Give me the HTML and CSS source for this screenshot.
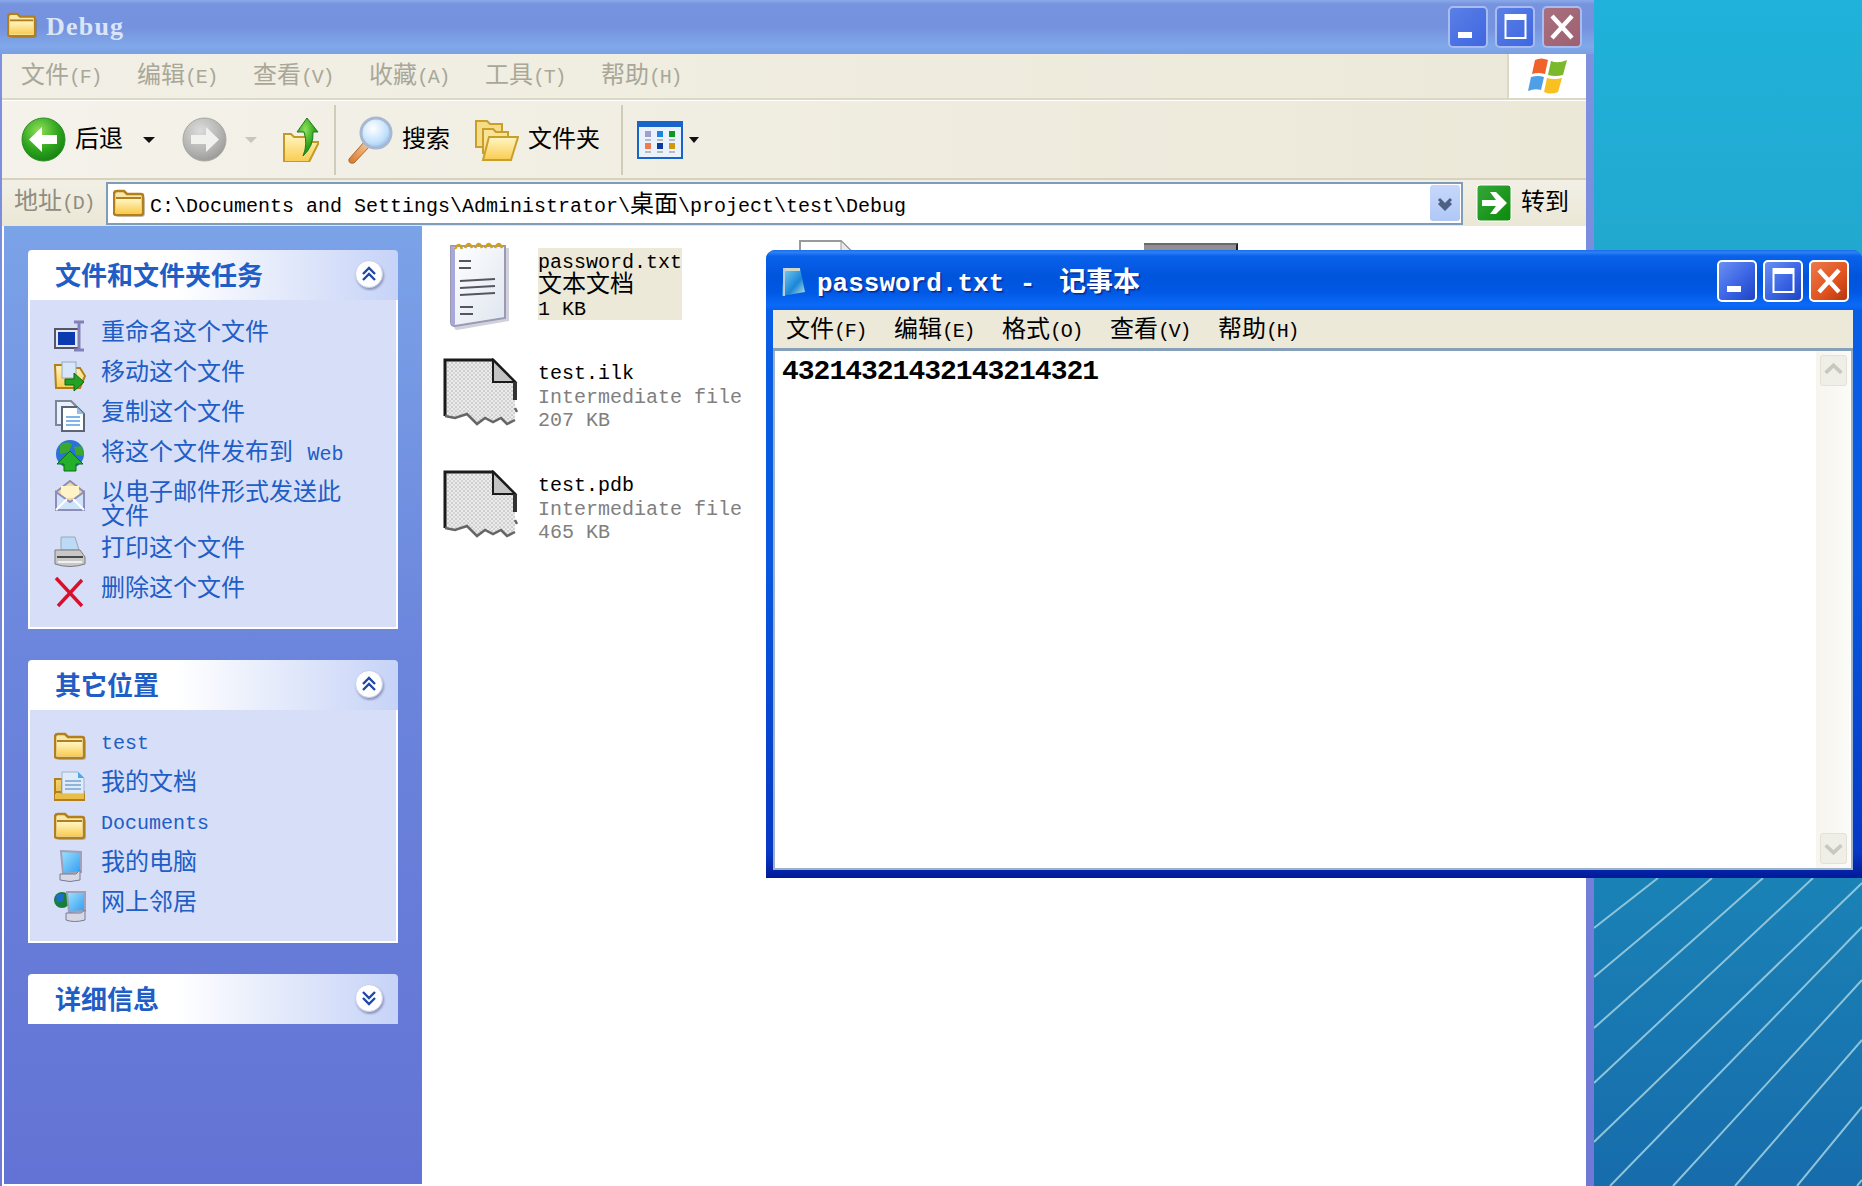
FILE: index.html
```html
<!DOCTYPE html>
<html lang="zh-CN">
<head>
<meta charset="utf-8">
<title>password.txt - 记事本</title>
<link rel="stylesheet" href="styles.css">
</head>
<body>
<svg class="defs" width="0" height="0" aria-hidden="true">
  <defs>
    <linearGradient id="gFolder" x1="0" y1="0" x2="0" y2="1"><stop offset="0" stop-color="#fff6c4"/><stop offset="1" stop-color="#f9cc50"/></linearGradient>
    <linearGradient id="gFolderD" x1="0" y1="0" x2="1" y2="1"><stop offset="0" stop-color="#f6d874"/><stop offset="1" stop-color="#c9971f"/></linearGradient>
    <radialGradient id="gGreen" cx=".4" cy=".3" r=".8"><stop offset="0" stop-color="#8fe05a"/><stop offset=".55" stop-color="#2fa51d"/><stop offset="1" stop-color="#0f7a12"/></radialGradient>
    <radialGradient id="gGray" cx=".4" cy=".3" r=".8"><stop offset="0" stop-color="#dcdcdc"/><stop offset=".6" stop-color="#b4b4b2"/><stop offset="1" stop-color="#929290"/></radialGradient>
    <radialGradient id="gLens" cx=".4" cy=".35" r=".7"><stop offset="0" stop-color="#ffffff"/><stop offset=".7" stop-color="#bfe0fb"/><stop offset="1" stop-color="#8db6e6"/></radialGradient>
    <linearGradient id="gHandle" x1="1" y1="0" x2="0" y2="1"><stop offset="0" stop-color="#f6cfa0"/><stop offset="1" stop-color="#d9752a"/></linearGradient>
    <linearGradient id="gGo" x1="0" y1="0" x2="1" y2="1"><stop offset="0" stop-color="#36a83a"/><stop offset="1" stop-color="#0a8a0a"/></linearGradient>
    <linearGradient id="gScreen" x1="0" y1="0" x2="1" y2="1"><stop offset="0" stop-color="#9fe2ff"/><stop offset="1" stop-color="#2f9bf0"/></linearGradient>
    <linearGradient id="gPad" x1="0" y1="0" x2="1" y2="1"><stop offset="0" stop-color="#7fd4ee"/><stop offset=".6" stop-color="#1b86d8"/><stop offset="1" stop-color="#bfe8d8"/></linearGradient>
    <linearGradient id="gNote" x1="0" y1="0" x2="1" y2="1"><stop offset="0" stop-color="#ffffff"/><stop offset="1" stop-color="#dfe6f0"/></linearGradient>
    <pattern id="pDither" width="4" height="4" patternUnits="userSpaceOnUse"><rect width="4" height="4" fill="#ececec"/><rect width="2" height="2" fill="#cdcdcd"/><rect x="2" y="2" width="2" height="2" fill="#d4d4d4"/></pattern>
    <filter id="fShadow" x="-20%" y="-20%" width="150%" height="150%"><feDropShadow dx="1" dy="2" stdDeviation="1" flood-color="#3a3a6a" flood-opacity=".45"/></filter>

    <symbol id="i-folder" viewBox="0 0 32 28">
      <path d="M3 7 Q3 4 6 4 H12 L15 7 H29 Q32 7 32 10 V25 Q32 28 29 28 H6 Q3 28 3 25Z" fill="#555" opacity=".3"/>
      <path d="M1 5 Q1 2 4 2 H11 L14 5 H28 Q30 5 30 7 V24 Q30 26 28 26 H3 Q1 26 1 24Z" fill="#f7e7a8" stroke="#b27f1c" stroke-width="2.500"/>
      <rect x="3" y="10" width="25" height="14" fill="url(#gFolder)"/>
      <path d="M3 9 H28" stroke="#b27f1c" stroke-width="2"/>
    </symbol>
    <symbol id="i-back" viewBox="0 0 45 45">
      <circle cx="22.5" cy="22.5" r="21.5" fill="url(#gGreen)" stroke="#2a8a22"/>
      <path d="M8 22.5 L21 10 V18 H36 V27 H21 V35Z" fill="#fff"/>
    </symbol>
    <symbol id="i-forward" viewBox="0 0 45 45">
      <circle cx="22.5" cy="22.5" r="21.5" fill="url(#gGray)" stroke="#a6a6a4"/>
      <path d="M37 22.5 L24 10 V18 H9 V27 H24 V35Z" fill="#f1f1ee"/>
    </symbol>
    <symbol id="i-up" viewBox="0 0 36 44">
      <path d="M1 16 H8 L11 19 H26 V24 H36 L26 44 H1Z" fill="url(#gFolder)" stroke="#c39a2a" stroke-width="2"/>
      <path d="M24 0 L35 14 H30 Q31 28 20 38 Q25 26 21 14 H14Z" fill="url(#gGreen)" stroke="#1e7e1e"/>
    </symbol>
    <symbol id="i-search" viewBox="0 0 48 48">
      <path d="M3 43 L19 25 L24 30 L8 47 Q2 48 3 43Z" fill="url(#gHandle)" stroke="#a8672e"/>
      <circle cx="30" cy="17" r="15" fill="url(#gLens)" stroke="#a9b8d2" stroke-width="3"/>
    </symbol>
    <symbol id="i-folders" viewBox="0 0 44 42">
      <path d="M1 2 H12 L15 5 H27 V28 H1Z" fill="#f5dc86" stroke="#c99f2a" stroke-width="2"/>
      <path d="M8 10 H18 L21 13 H33 V34 H8Z" fill="#f8e398" stroke="#c99f2a" stroke-width="2"/>
      <path d="M14 18 H43 L36 41 H8Z" fill="url(#gFolder)" stroke="#c99f2a" stroke-width="2"/>
    </symbol>
    <symbol id="i-views" viewBox="0 0 46 38">
      <rect x="1" y="1" width="44" height="36" fill="#eaf3fd" stroke="#1864c8" stroke-width="2"/>
      <rect x="1" y="1" width="44" height="5" fill="#1864c8"/>
      <rect x="8" y="10" width="6" height="6" fill="#a0a0cf"/><rect x="20" y="10" width="6" height="6" fill="#1a86e0"/><rect x="32" y="10" width="6" height="6" fill="#0e9a1e"/>
      <rect x="8" y="22" width="6" height="6" fill="#f07a50"/><rect x="20" y="22" width="6" height="6" fill="#0a3ca0"/><rect x="32" y="22" width="6" height="6" fill="#d09a10"/>
      <path d="M8 19 H14 M20 19 H26 M32 19 H38 M8 31 H14 M20 31 H26 M32 31 H38" stroke="#a8a8a8" stroke-width="1.5"/>
    </symbol>
    <symbol id="i-flag" viewBox="0 0 40 38">
      <path d="M7 3 Q13 0 20 3 L17 17 Q10 15 4 17Z" fill="#f0622a"/>
      <path d="M23 4 Q30 7 39 3 L35 18 Q27 20 20 18Z" fill="#7ab82c"/>
      <path d="M3 20 Q10 18 16 20 L13 33 Q7 31 0 34Z" fill="#4f9ee8"/>
      <path d="M19 21 Q26 23 34 21 L30 35 Q23 38 16 35Z" fill="#f8c020"/>
    </symbol>
    <symbol id="i-go" viewBox="0 0 36 38">
      <rect x="1" y="1" width="34" height="36" rx="3" fill="url(#gGo)" stroke="#fff"/>
      <path d="M6 16 H20 L14 8 H20 L31 19 L20 30 H14 L20 22 H6Z" fill="#fff"/>
    </symbol>
    <symbol id="i-chev-dd" viewBox="0 0 30 36">
      <path d="M9 14 L15 20 L21 14 M9 18 L15 24 L21 18" fill="none" stroke="#4d6185" stroke-width="3"/>
    </symbol>
    <symbol id="i-up2" viewBox="0 0 32 32">
      <circle cx="15" cy="15" r="13.5" fill="#fff" stroke="#c5cfec" filter="url(#fShadow)"/>
      <path d="M9 15 L15 9 L21 15 M9 21 L15 15 L21 21" fill="none" stroke="#2048a8" stroke-width="2.4"/>
    </symbol>
    <symbol id="i-down2" viewBox="0 0 32 32">
      <circle cx="15" cy="15" r="13.5" fill="#fff" stroke="#c5cfec" filter="url(#fShadow)"/>
      <path d="M9 9 L15 15 L21 9 M9 15 L15 21 L21 15" fill="none" stroke="#2048a8" stroke-width="2.4"/>
    </symbol>
    <symbol id="i-rename" viewBox="0 0 32 32">
      <rect x="1" y="9" width="24" height="19" fill="#e8e8f0" stroke="#55556a" stroke-width="2"/>
      <rect x="4" y="12" width="17" height="13" fill="#0c3ab0"/>
      <path d="M20 2 H30 M25 2 V30 M20 30 H30" fill="none" stroke="#8480b8" stroke-width="3"/>
    </symbol>
    <symbol id="i-move" viewBox="0 0 32 32">
      <path d="M1 5 H9 L11 8 H26 L31 16 L26 28 H2Z" fill="url(#gFolder)" stroke="#b27f1c" stroke-width="2"/>
      <rect x="8" y="2" width="14" height="16" fill="#d7e6fb" stroke="#9ab"/>
      <path d="M11 19 H20 V13 L30 22 L20 31 V25 H11Z" fill="#23a026" stroke="#0c6a12"/>
    </symbol>
    <symbol id="i-copy" viewBox="0 0 32 32">
      <path d="M2 1 H17 L22 6 V25 H2Z" fill="#e8f0fb" stroke="#7d8796" stroke-width="2"/>
      <path d="M8 7 H23 L30 14 V31 H8Z" fill="#fff" stroke="#5a6678" stroke-width="2"/>
      <path d="M23 7 V14 H30Z" fill="#8fc0f0"/>
      <path d="M12 17 H26 M12 21 H26 M12 25 H26" stroke="#7fb6ea" stroke-width="2"/>
    </symbol>
    <symbol id="i-publish" viewBox="0 0 32 32">
      <circle cx="16" cy="14" r="14" fill="#2a72d8"/>
      <path d="M6 5 Q13 0 18 4 L15 12 L6 14Z M20 7 L28 6 L30 16 L22 15Z" fill="#3aa82e"/>
      <path d="M16 11 L29 24 H22 V31 H10 V24 H3Z" fill="#25b02a" stroke="#0e6e14"/>
    </symbol>
    <symbol id="i-mail" viewBox="0 0 32 32">
      <path d="M2 12 L16 1 L30 12 V30 H2Z" fill="#f7d89a" stroke="#8d8db8" stroke-width="2"/>
      <rect x="7" y="6" width="18" height="12" fill="#fff3c8"/>
      <path d="M2 12 L16 22 L30 12 V30 H2Z" fill="#cfe4fa" stroke="#8d8db8" stroke-width="2"/>
      <path d="M2 30 L13 19 M30 30 L19 19" stroke="#fff" stroke-width="2"/>
    </symbol>
    <symbol id="i-print" viewBox="0 0 32 32">
      <path d="M7 1 H21 L25 14 H7Z" fill="#bcd9f5" stroke="#9aa8b8"/>
      <path d="M1 14 H26 L31 21 V28 Q16 33 1 28Z" fill="#c8c8c8" stroke="#7b7b7b"/>
      <path d="M3 21 H29" stroke="#4a4a4a" stroke-width="2"/>
      <path d="M4 26 H28" stroke="#f0f0f0" stroke-width="2"/>
    </symbol>
    <symbol id="i-delete" viewBox="0 0 32 32">
      <path d="M2 2 L28 30 M28 4 L4 30" stroke="#d8102c" stroke-width="3.4"/>
    </symbol>
    <symbol id="i-docs" viewBox="0 0 32 32">
      <path d="M1 9 H8 V30 H1Z M1 22 H30 V30 H1Z" fill="url(#gFolderD)" stroke="#b27f1c" stroke-width="2"/>
      <path d="M8 2 H24 L30 8 V24 H8Z" fill="#dfeafa" stroke="#9eb4cc"/>
      <path d="M24 2 V8 H30Z" fill="#4aa8ee"/>
      <path d="M11 11 H27 M11 15 H27 M11 19 H27" stroke="#8fb4d8" stroke-width="2"/>
      <path d="M1 24 H30 V29 H1Z" fill="#e9bd48"/>
    </symbol>
    <symbol id="i-pc" viewBox="0 0 32 32">
      <path d="M7 1 L27 2 V22 L9 24Z" fill="url(#gScreen)" stroke="#a0a0b8" stroke-width="2"/>
      <path d="M6 24 H22 L26 20 V30 Q16 33 6 30Z" fill="#d8d8e4" stroke="#7a7a98"/>
    </symbol>
    <symbol id="i-net" viewBox="0 0 32 32">
      <circle cx="8" cy="10" r="8" fill="#16803a"/>
      <path d="M2 6 Q6 2 10 5 L9 11 L3 13Z" fill="#1f6fc8"/>
      <path d="M13 2 L31 2 V21 L15 22Z" fill="url(#gScreen)" stroke="#a0a0b8" stroke-width="2"/>
      <path d="M12 23 H27 L31 20 V30 Q20 33 12 30Z" fill="#d8d8e4" stroke="#7a7a98"/>
    </symbol>
    <symbol id="i-note" viewBox="0 0 61 90">
      <path d="M5 6 H58 V79 L6 88 Q3 88 3 84Z" fill="#7a7a9c" opacity=".35" transform="translate(2 2)"/>
      <path d="M2 6 H56 V78 L6 86 Q2 86 2 82Z" fill="url(#gNote)" stroke="#9a9ab4" stroke-width="2"/>
      <path d="M2 6 V84 L6 86 V8Z" fill="#a8a8dc"/>
      <path d="M6 9 Q10 1 13 9 M16 8 Q20 0 23 8 M26 8 Q30 0 33 8 M36 8 Q40 0 43 8 M46 8 Q50 0 53 8" fill="none" stroke="#d0a020" stroke-width="2.6"/>
      <path d="M10 21 H22 M10 28 H22 M11 41 L46 39 M11 48 L46 46 M11 55 L46 53 M11 67 H24 M11 74 H24" stroke="#55555f" stroke-width="2.2"/>
    </symbol>
    <symbol id="i-unknown" viewBox="0 0 75 68">
      <path d="M2 2 H50 L72 24 V62 L64 66 L58 60 L50 64 L42 60 L34 66 L24 56 L12 60 L2 58Z" fill="url(#pDither)"/>
      <path d="M2 58 V2 H50 L72 24 V42" fill="none" stroke="#1a1a1a" stroke-width="3"/>
      <path d="M50 2 L72 24 H50Z" fill="#c4c4c4" stroke="#1a1a1a" stroke-width="2"/>
      <path d="M72 24 V42" fill="none" stroke="#333" stroke-width="4"/>
      <path d="M72 50 L74 54 M2 58 L12 60 L24 56 L34 66 L42 60 L50 64 L58 60 L64 66 L72 62" fill="none" stroke="#666" stroke-width="2.500"/>
    </symbol>
    <symbol id="i-doc" viewBox="0 0 60 70">
      <path d="M1 1 H42 L59 18 V69 H1Z" fill="#fff" stroke="#999" stroke-width="2"/>
      <path d="M42 1 V18 H59Z" fill="#e8e8e8" stroke="#999"/>
    </symbol>
    <symbol id="i-padsmall" viewBox="0 0 26 30">
      <path d="M4 2 H20 L25 26 L2 30Z" fill="url(#gPad)"/>
      <path d="M4 2 H20 V5 H4Z" fill="#cfd8c8"/>
      <path d="M4 2 V30" stroke="#bcd" stroke-width="2"/>
    </symbol>
    <symbol id="i-min" viewBox="0 0 40 42"><rect x="10" y="26" width="14" height="6" fill="#fff"/></symbol>
    <symbol id="i-max" viewBox="0 0 40 42"><rect x="10.5" y="9" width="20" height="23" fill="none" stroke="#fff" stroke-width="2"/><rect x="10" y="9" width="21" height="5" fill="#fff"/></symbol>
    <symbol id="i-close" viewBox="0 0 40 42"><path d="M10 10 L30 32 M30 10 L10 32" stroke="#fff" stroke-width="4.4"/></symbol>
  </defs>
</svg>

<main class="desktop">
  <svg class="stripes" viewBox="0 0 269 308" width="269" height="308" aria-hidden="true">
    <path d="M1 50 L65 0 M1 99 L119 0 M1 150 L170 0 M1 205 L220 0 M1 264 L269 5 M17 308 L269 49 M80 308 L269 102 M142 308 L269 162 M204 308 L269 229 M264 308 L269 302" fill="none" stroke="#8ec4da" stroke-width="2"/>
  </svg>

  <section class="explorer">
    <header class="xtitle">
      <svg class="xtitle-icon"><use href="#i-folder"/></svg>
      <span class="xtitle-text">Debug</span>
      <div class="wbtns xbtns">
        <span class="wbtn"><svg><use href="#i-min"/></svg></span>
        <span class="wbtn"><svg><use href="#i-max"/></svg></span>
        <span class="wbtn wclose"><svg><use href="#i-close"/></svg></span>
      </div>
    </header>
    <div class="frame">
      <div class="menurow">
        <nav class="menu xmenu">
          <span>文件<span class="mk">(F)</span></span>
          <span>编辑<span class="mk">(E)</span></span>
          <span>查看<span class="mk">(V)</span></span>
          <span>收藏<span class="mk">(A)</span></span>
          <span>工具<span class="mk">(T)</span></span>
          <span>帮助<span class="mk">(H)</span></span>
        </nav>
        <div class="logo"><svg><use href="#i-flag"/></svg></div>
      </div>
      <div class="toolbar">
        <svg class="ti back"><use href="#i-back"/></svg>
        <span class="tl l-back">后退</span>
        <i class="caret c-back"></i>
        <svg class="ti fwd"><use href="#i-forward"/></svg>
        <i class="caret c-fwd"></i>
        <svg class="ti upf"><use href="#i-up"/></svg>
        <i class="tsep s1"></i>
        <svg class="ti srch"><use href="#i-search"/></svg>
        <span class="tl l-srch">搜索</span>
        <svg class="ti fold"><use href="#i-folders"/></svg>
        <span class="tl l-fold">文件夹</span>
        <i class="tsep s2"></i>
        <svg class="ti view"><use href="#i-views"/></svg>
        <i class="caret c-view"></i>
      </div>
      <div class="addr">
        <span class="addr-label">地址<span class="mk">(D)</span></span>
        <div class="addr-box">
          <svg class="addr-icon"><use href="#i-folder"/></svg>
          <span class="addr-text"><span class="m">C:\Documents and Settings\Administrator\</span>桌面<span class="m">\project\test\Debug</span></span>
          <span class="addr-dd"><svg><use href="#i-chev-dd"/></svg></span>
        </div>
        <svg class="go-icon"><use href="#i-go"/></svg>
        <span class="go-label">转到</span>
      </div>
      <div class="main">
        <aside class="sidebar">
          <section class="panel">
            <h2 class="ph"><span class="ph-text">文件和文件夹任务</span><svg class="ph-btn"><use href="#i-up2"/></svg></h2>
            <ul class="pb">
              <li><svg><use href="#i-rename"/></svg><span>重命名这个文件</span></li>
              <li><svg><use href="#i-move"/></svg><span>移动这个文件</span></li>
              <li><svg><use href="#i-copy"/></svg><span>复制这个文件</span></li>
              <li><svg><use href="#i-publish"/></svg><span>将这个文件发布到 <span class="m">Web</span></span></li>
              <li><svg><use href="#i-mail"/></svg><span>以电子邮件形式发送此文件</span></li>
              <li><svg><use href="#i-print"/></svg><span>打印这个文件</span></li>
              <li><svg><use href="#i-delete"/></svg><span>删除这个文件</span></li>
            </ul>
          </section>
          <section class="panel">
            <h2 class="ph"><span class="ph-text">其它位置</span><svg class="ph-btn"><use href="#i-up2"/></svg></h2>
            <ul class="pb">
              <li><svg><use href="#i-folder"/></svg><span class="m">test</span></li>
              <li><svg><use href="#i-docs"/></svg><span>我的文档</span></li>
              <li><svg><use href="#i-folder"/></svg><span class="m">Documents</span></li>
              <li><svg><use href="#i-pc"/></svg><span>我的电脑</span></li>
              <li><svg><use href="#i-net"/></svg><span>网上邻居</span></li>
            </ul>
          </section>
          <section class="panel">
            <h2 class="ph"><span class="ph-text">详细信息</span><svg class="ph-btn"><use href="#i-down2"/></svg></h2>
          </section>
        </aside>
        <div class="files">
          <article class="tile">
            <svg class="ficon fnote"><use href="#i-note"/></svg>
            <div class="ftext selected"><div><span class="m">password.txt</span></div><div>文本文档</div><div class="fsize"><span class="m">1 KB</span></div></div>
          </article>
          <article class="tile">
            <svg class="ficon fdoc"><use href="#i-doc"/></svg>
          </article>
          <article class="tile">
            <i class="fgray"></i>
          </article>
          <article class="tile">
            <svg class="ficon funk"><use href="#i-unknown"/></svg>
            <div class="ftext"><div class="fname m">test.ilk</div><div class="m">Intermediate file</div><div class="fsize m">207 KB</div></div>
          </article>
          <article class="tile tile-new">
            <svg class="ficon funk"><use href="#i-unknown"/></svg>
            <div class="ftext"><div class="fname m">test.pdb</div><div class="m">Intermediate file</div><div class="fsize m">465 KB</div></div>
          </article>
        </div>
      </div>
    </div>
  </section>

  <section class="notepad">
    <header class="ntitle">
      <svg class="ntitle-icon"><use href="#i-padsmall"/></svg>
      <span class="ntitle-text">password.txt - <span class="ntitle-cjk">记事本</span></span>
      <div class="wbtns nbtns">
        <span class="wbtn active"><svg><use href="#i-min"/></svg></span>
        <span class="wbtn active"><svg><use href="#i-max"/></svg></span>
        <span class="wbtn wclose active"><svg><use href="#i-close"/></svg></span>
      </div>
    </header>
    <nav class="menu nmenu">
      <span>文件<span class="mk">(F)</span></span>
      <span>编辑<span class="mk">(E)</span></span>
      <span>格式<span class="mk">(O)</span></span>
      <span>查看<span class="mk">(V)</span></span>
      <span>帮助<span class="mk">(H)</span></span>
    </nav>
    <div class="client">
      <div class="content">43214321432143214321</div>
      <div class="scroll">
        <span class="sbtn"><svg viewBox="0 0 27 31"><path d="M5 18 L13.500 10 L22 18" fill="none" stroke="#c8c8c0" stroke-width="4"/></svg></span>
        <span class="sbtn"><svg viewBox="0 0 27 31"><path d="M5 12 L13.500 20 L22 12" fill="none" stroke="#c8c8c0" stroke-width="4"/></svg></span>
      </div>
    </div>
  </section>
</main>
</body>
</html>
```

FILE: styles.css
```css
* { box-sizing: border-box; }
html, body { margin: 0; padding: 0; }
body {
  width: 1862px;
  height: 1186px;
  overflow: hidden;
  font-family: "Liberation Mono", "Noto Sans CJK SC", monospace;
  font-size: 24px;
  line-height: 24px;
  color: #000;
}
.defs { position: absolute; }
svg { display: block; }
ul { list-style: none; margin: 0; padding: 0; }
h2 { margin: 0; }
i { font-style: normal; }
.m { font-family: "Liberation Mono", monospace; font-size: 20px; }
.mk { font-family: "Liberation Mono", monospace; font-size: 20px; letter-spacing: -1.2px; }

.desktop {
  position: relative;
  width: 1862px;
  height: 1186px;
  overflow: hidden;
  background: linear-gradient(180deg, #1fb2da 0%, #22a8cf 22%, #1a82b6 74%, #176cab 100%);
}
.stripes { position: absolute; left: 1593px; top: 878px; }

/* Explorer window */
.explorer {
  position: absolute;
  left: 0;
  top: 0;
  width: 1594px;
  height: 1186px;
  display: flex;
  flex-direction: column;
  background: linear-gradient(180deg, #7e93e0 0%, #7078d6 100%);
}
.xtitle {
  height: 54px;
  flex: none;
  display: flex;
  align-items: center;
  padding: 0 12px 0 7px;
  background: linear-gradient(180deg, #88a9ea 0, #7793de 8%, #7592de 50%, #80a8e9 85%, #7b9fe3 100%);
}
.xtitle-icon { width: 30px; height: 26px; margin-top: -4px; }
.xtitle-text {
  margin-left: 9px;
  margin-top: -1px;
  font-family: "Liberation Serif", serif;
  font-weight: 700;
  font-size: 26px;
  letter-spacing: 1.2px;
  color: #dbe5f8;
}
.wbtns { margin-left: auto; display: flex; }
.xbtns { gap: 7px; }
.nbtns { gap: 6px; }
.wbtn {
  width: 40px;
  height: 42px;
  border: 2px solid #a8bcef;
  border-radius: 5px;
  background: linear-gradient(135deg, #5a7fe6, #3f67e0);
  position: relative;
  overflow: hidden;
}
.wbtn svg { position: absolute; left: -2px; top: -2px; width: 40px; height: 42px; }
.wclose { background: linear-gradient(135deg, #a8707f, #9e6070); }
.wbtn.active { border-color: #fff; background: linear-gradient(135deg, #6a90f2 0%, #3a64e4 55%, #1d44c4 100%); }
.wbtn.wclose.active { background: linear-gradient(135deg, #ec7a4c 0%, #e0521f 60%, #b8340c 100%); }

.frame {
  flex: 1;
  min-height: 0;
  display: flex;
  flex-direction: column;
  padding: 0 8px 0 2px;
}

/* Menus */
.menu { display: flex; align-items: center; white-space: nowrap; }
.menurow {
  height: 47px;
  flex: none;
  display: flex;
  border-bottom: 1px solid #fff;
}
.xmenu {
  flex: 1;
  height: 46px;
  padding: 2px 0 0 19px;
  gap: 35px;
  color: #a9a798;
  background: linear-gradient(90deg, #f2f0e6, #ede9da);
  border-bottom: 2px solid #dcd8c4;
  border-right: 2px solid #dcd8c4;
}
.xmenu > span, .nmenu > span { width: 81px; }
.logo {
  width: 77px;
  height: 46px;
  background: #fff;
  border-bottom: 2px solid #dcd8c4;
  display: flex;
  align-items: center;
  justify-content: center;
}
.logo svg { width: 40px; height: 38px; margin-left: 1px; }

/* Toolbar */
.toolbar {
  height: 79px;
  flex: none;
  display: flex;
  align-items: center;
  background: linear-gradient(90deg, #f4f2ea, #ece8d8);
  border-bottom: 2px solid #d8d2bd;
}
.ti { flex: none; }
.tl { flex: none; padding-top: 3px; }
.back { width: 45px; height: 45px; margin-left: 19px; }
.l-back { margin-left: 9px; }
.caret {
  width: 0; height: 0;
  border-left: 6px solid transparent;
  border-right: 6px solid transparent;
  border-top: 6px solid #111;
}
.c-back { margin-left: 20px; }
.fwd { width: 45px; height: 45px; margin-left: 27px; }
.c-fwd { margin-left: 18px; border-top-color: #c8c6ba; }
.upf { width: 36px; height: 44px; margin-left: 26px; }
.tsep { width: 2px; height: 70px; background: #d0ccb8; }
.s1 { margin-left: 15px; }
.srch { width: 48px; height: 48px; margin-left: 10px; }
.l-srch { margin-left: 8px; }
.fold { width: 44px; height: 42px; margin-left: 25px; }
.l-fold { margin-left: 9px; }
.s2 { margin-left: 21px; }
.view { width: 46px; height: 38px; margin-left: 14px; }
.c-view { margin-left: 6px; border-left-width: 5px; border-right-width: 5px; }

/* Address bar */
.addr {
  height: 46px;
  flex: none;
  display: flex;
  align-items: center;
  background: linear-gradient(180deg, #f2f0e6, #ebe7d6);
}
.addr-label { width: 104px; padding: 1px 0 0 12px; color: #8f8d80; white-space: nowrap; }
.addr-box {
  width: 1357px;
  height: 43px;
  display: flex;
  align-items: center;
  background: #fff;
  border: 2px solid #7f9db9;
  padding-left: 5px;
}
.addr-icon { width: 32px; height: 28px; }
.addr-text { margin-left: 5px; padding-top: 7px; white-space: nowrap; }
.addr-dd {
  margin-left: auto;
  margin-right: 1px;
  width: 30px;
  height: 36px;
  background: linear-gradient(180deg, #c6d7fb, #b0c8f6);
  border-radius: 3px;
}
.addr-dd svg { width: 30px; height: 36px; }
.go-icon { width: 36px; height: 38px; margin-left: 13px; }
.go-label { margin-left: 9px; padding-top: 1px; }

/* Main */
.main {
  flex: 1;
  min-height: 0;
  display: flex;
  background: #fff;
  border-bottom: 2px solid #fff;
}
.sidebar {
  width: 418px;
  flex: none;
  margin-left: 2px;
  padding: 24px 0 0 24px;
  display: flex;
  flex-direction: column;
  gap: 31px;
  background: linear-gradient(180deg, #7ba3e8 0%, #6b85dc 45%, #6373d5 100%);
}
.panel { width: 370px; }
.ph {
  height: 50px;
  display: flex;
  align-items: center;
  justify-content: space-between;
  padding: 0 12px 0 27px;
  font-family: "Noto Sans CJK SC", sans-serif;
  font-size: 26px;
  font-weight: 700;
  color: #215dc6;
  background: linear-gradient(90deg, #fff 0%, #fff 40%, #c6d3f7 100%);
  border-radius: 4px 4px 0 0;
}
.ph-text { margin-top: -2px; }
.ph-btn { width: 32px; height: 32px; }
.pb {
  padding: 20px 45px 19px 24px;
  display: flex;
  flex-direction: column;
  gap: 8px;
  background: #d6dff7;
  border: 2px solid #fff;
  border-top: 0;
  color: #215dc6;
}
.pb li { display: flex; gap: 15px; min-height: 32px; align-items: flex-start; }
.pb li svg { width: 32px; height: 32px; flex: none; }
.pb li > span { margin: 2px 0 -2px; }
.pb li > .m { line-height: 24px; }

/* Files */
.files {
  flex: 1;
  min-width: 0;
  padding: 22px 0 0 21px;
  display: grid;
  grid-template-columns: repeat(3, 345px);
  grid-auto-rows: 72px;
  row-gap: 40px;
  align-content: start;
}
.tile { display: flex; align-items: flex-start; }
.tile-new { grid-column: 1; }
.ficon { flex: none; }
.fnote { width: 61px; height: 90px; margin: -8px 28px 0 6px; }
.funk { width: 75px; height: 68px; margin: -2px 20px 0 0; }
.fdoc { width: 60px; height: 70px; margin: -8px 0 0 11px; }
.fgray {
  display: block;
  width: 94px;
  height: 60px;
  margin: -5px 0 0 11px;
  background: #8f8f94;
  border-top: 2px solid #6a6a6a;
  border-right: 2px solid #222;
}
.ftext { width: max-content; height: 72px; padding-top: 2px; color: #808080; }
.ftext > div { height: 24px; white-space: nowrap; }
.ftext > .fsize { height: 22px; margin-top: -1px; }
.ftext .fname { color: #000; }
.selected { background: #ece9d8; color: #000; }

/* Notepad */
.notepad {
  position: absolute;
  left: 766px;
  top: 250px;
  width: 1096px;
  height: 628px;
  display: flex;
  flex-direction: column;
  padding: 0 9px 8px 7px;
  border-radius: 9px 9px 0 0;
  background: linear-gradient(180deg, #0a5ee6 0%, #0858e0 50%, #0638c4 96%, #021a99 100%);
  overflow: hidden;
}
.ntitle {
  height: 60px;
  flex: none;
  margin: 0 -9px 0 -7px;
  padding: 2px 13px 0 14px;
  display: flex;
  align-items: center;
  background: linear-gradient(180deg, #1a6ef0 0, #2b80f6 4%, #0a62ea 10%, #0054dc 45%, #0058e4 70%, #0a6af8 92%, #0a60ec 100%);
}
.ntitle-icon { width: 26px; height: 30px; }
.ntitle-text {
  margin-left: 11px;
  padding-top: 2px;
  font-weight: 700;
  font-size: 26px;
  white-space: pre;
  color: #fff;
  text-shadow: 1px 1px 0 #0a2a90, 2px 2px 0 rgba(10, 40, 140, .5);
}
.ntitle-cjk { margin-left: 8px; font-family: "Noto Sans CJK SC", sans-serif; font-size: 27px; }
.nmenu {
  height: 41px;
  flex: none;
  padding: 4px 0 0 13px;
  gap: 27px;
  background: #ece9d8;
  border-bottom: 3px solid #87a0b9;
}
.client {
  flex: 1;
  min-height: 0;
  display: flex;
  justify-content: space-between;
  background: #fff;
  border: 2px solid #9cb2c8;
  border-top: 0;
  padding-right: 1px;
}
.content {
  padding: 6px 0 0 7px;
  font-weight: 700;
  font-size: 28px;
  line-height: 30px;
  letter-spacing: -1px;
}
.scroll {
  width: 34px;
  flex: none;
  display: flex;
  flex-direction: column;
  justify-content: space-between;
  align-items: center;
  padding: 4px 0;
  background: linear-gradient(90deg, #f6f5ee, #fbfbf8);
}
.sbtn {
  width: 27px;
  height: 31px;
  background: #f0efe7;
  border: 1px solid #e4e2d6;
  border-radius: 3px;
}
.sbtn svg { width: 25px; height: 29px; }
```
